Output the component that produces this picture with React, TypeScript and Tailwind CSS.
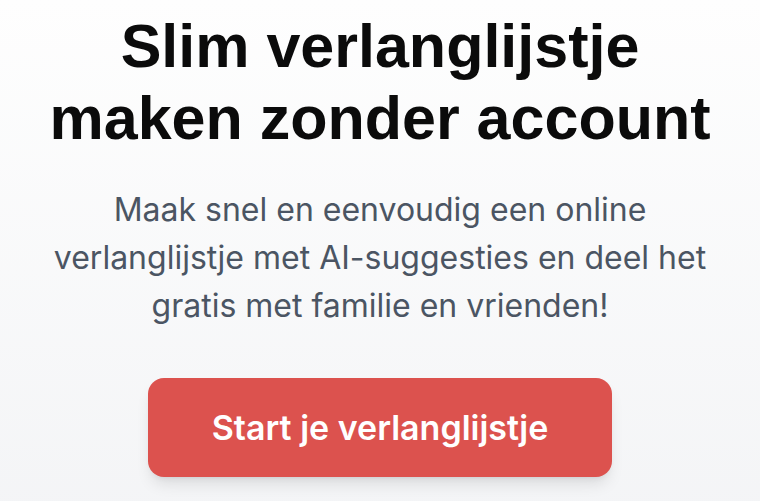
export default function App() {
  return (
    <div className="min-h-screen bg-gradient-to-b from-[#fefefe] to-[#f3f4f6] px-6 pt-[10px] pb-16 font-['Inter',sans-serif]">
      <section className="mx-auto flex max-w-[712px] flex-col items-center text-center">
        <h1 className="max-w-[690px] font-['Liberation_Sans',Arial,sans-serif] text-[61px] font-bold leading-[72px] text-[#0b0b0b]">
          Slim verlanglijstje maken zonder account
        </h1>
        <p className="mt-8 text-[32px] leading-[48px] text-[#4b5563]">
          Maak snel en eenvoudig een online verlanglijstje met AI-suggesties en deel het gratis met familie en vrienden!
        </p>
        <button className="mt-12 rounded-2xl bg-[#dc524e] px-16 pt-6 pb-[23px] text-[34px] font-semibold leading-[52px] text-white shadow-lg">
          Start je verlanglijstje
        </button>
      </section>
    </div>
  );
}
